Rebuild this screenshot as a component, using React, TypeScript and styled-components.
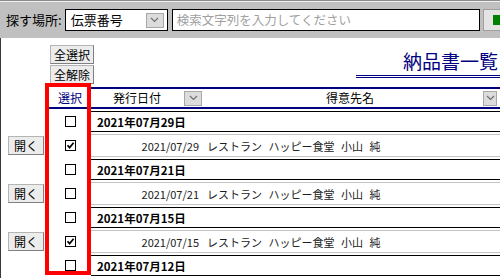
import React from 'react';
import styled, { createGlobalStyle } from 'styled-components';

const GlobalStyle = createGlobalStyle`
  html, body {
    margin: 0;
    padding: 0;
    background: #ffffff;
  }
  body {
    width: 500px;
    height: 278px;
    overflow: hidden;
    font-family: "Noto Sans CJK JP", "Liberation Sans", sans-serif;
    font-size: 12px;
    color: #000;
  }
`;

interface Row {
  kind: 'group' | 'detail';
  label?: string;
  date?: string;
  name?: string;
  checked?: boolean;
}

const rows: Row[] = [
  { kind: 'group', label: '2021年07月29日' },
  { kind: 'detail', date: '2021/07/29', name: 'レストラン ハッピー食堂 小山 純', checked: true },
  { kind: 'group', label: '2021年07月21日' },
  { kind: 'detail', date: '2021/07/21', name: 'レストラン ハッピー食堂 小山 純' },
  { kind: 'group', label: '2021年07月15日' },
  { kind: 'detail', date: '2021/07/15', name: 'レストラン ハッピー食堂 小山 純', checked: true },
  { kind: 'group', label: '2021年07月12日' },
];

const Page = styled.div`
  width: 500px;
  height: 278px;
  overflow: hidden;
  display: flex;
  flex-direction: column;
`;

/* search bar */
const Toolbar = styled.div`
  height: 36px;
  flex: none;
  background: #c0c0c0;
  border-top: 1px solid #8c8c8c;
  box-shadow: inset 0 1px 0 #f0f0f0;
  display: flex;
  align-items: center;
  padding: 1px 0 0 6px;
  white-space: nowrap;
`;

const Label = styled.span`
  flex: none;
  font-size: 13px;
  line-height: 16px;
  margin-right: 3px;
`;

const SelectBox = styled.div`
  flex: none;
  width: 96px;
  height: 20px;
  background: #fff;
  border: 1px solid #000;
  display: flex;
  align-items: center;
  padding-left: 5px;
  box-sizing: content-box;
  margin-right: 4px;
`;

const SelectText = styled.span`
  flex: 1;
  font-size: 13px;
  line-height: 16px;
`;

const DropButton = styled.span<{ $w?: number }>`
  width: ${(p) => p.$w ?? 16}px;
  height: 13px;
  margin-right: 3px;
  background: #dcdcdc;
  border: 1px solid #a8a8a8;
  display: flex;
  align-items: center;
  justify-content: center;
  flex: none;
`;

const SearchInput = styled.div`
  flex: none;
  width: 302px;
  height: 20px;
  background: #fff;
  border: 1px solid #000;
  display: flex;
  align-items: center;
  padding-left: 4px;
  color: #a0a0a0;
  font-size: 12.5px;
  line-height: 16px;
  margin-right: 3px;
`;

const GoButton = styled.div`
  flex: none;
  width: 20px;
  height: 20px;
  background: #e4e4e4;
  border: 1px solid #a0a0a0;
  border-right: none;
  display: flex;
  align-items: center;
  padding-left: 9px;
`;

const GreenMark = styled.span`
  width: 10px;
  height: 10px;
  background: #008000;
`;

/* main area */
const Main = styled.div`
  flex: 1;
  position: relative;
  border-left: 1px solid #3a3a3a;
  background: #fff;
`;

const TopArea = styled.div`
  height: 49px;
  display: flex;
  align-items: flex-start;
  padding: 7px 0 0 49px;
  box-sizing: border-box;
`;

const BulkButtons = styled.div`
  display: flex;
  flex-direction: column;
  gap: 1px;
`;

const SmallButton = styled.button`
  height: 19px;
  padding: 0 3px;
  background: #ececec;
  border: 1px solid #b4b4b4;
  border-right-color: #808080;
  border-bottom-color: #808080;
  font-family: inherit;
  font-size: 12px;
  line-height: 14px;
  color: #000;
  display: flex;
  align-items: center;
  justify-content: center;
  white-space: nowrap;
`;

const TitleBlock = styled.div`
  margin-left: auto;
  width: 142px;
  height: 30px;
  border-bottom: 3px double #000080;
  text-align: right;
  color: #000080;
  font-size: 19px;
  line-height: 31px;
  padding-right: 2px;
  box-sizing: content-box;
  white-space: nowrap;
  overflow: hidden;
`;

const Grid = styled.div`
  display: grid;
  grid-template-columns: 44px 46px 1fr;
`;

const HeaderRow = styled(Grid)`
  height: 22px;
`;

const HeadSelect = styled.div`
  grid-column: 2;
  border-bottom: 2px solid #000080;
  color: #000080;
  display: flex;
  align-items: center;
  justify-content: center;
  padding: 1px 0 0 4px;
`;

const HeadCells = styled.div`
  border-top: 2px solid #000080;
  border-bottom: 2px solid #000080;
  display: grid;
  grid-template-columns: 112px 1fr;
  align-items: center;
`;

const HeadCell = styled.div<{ $pad: number }>`
  display: flex;
  align-items: center;
  padding-left: ${(p) => p.$pad}px;
  line-height: 14px;
  white-space: nowrap;
`;

const BodyRow = styled(Grid)<{ $detail: boolean }>`
  height: ${(p) => (p.$detail ? 25 : 23)}px;
  padding-top: 2px;
  box-sizing: border-box;
`;

const OpenCell = styled.div`
  display: flex;
  align-items: center;
  padding-left: 7px;
`;

const CheckCell = styled.div`
  display: flex;
  align-items: center;
  justify-content: center;
  padding-left: 4px;
`;

const Box = styled.span`
  width: 9px;
  height: 9px;
  border: 1px solid #000;
  background: #fff;
  display: flex;
  align-items: center;
  justify-content: center;
`;

const DataCell = styled.div<{ $detail: boolean }>`
  border-top: 1px solid ${(p) => (p.$detail ? '#c4c4c4' : '#000')};
  border-bottom: 1px solid ${(p) => (p.$detail ? '#c4c4c4' : '#000')};
  display: grid;
  grid-template-columns: 112px 1fr;
  align-items: center;
  white-space: nowrap;
`;

const GroupLabel = styled.span`
  grid-column: 1 / 3;
  padding-left: 6px;
  font-weight: bold;
  font-size: 11.5px;
  line-height: 14px;
`;

const DateText = styled.span`
  text-align: right;
  padding-right: 4px;
  font-size: 11px;
  line-height: 14px;
  color: #202020;
`;

const NameText = styled.span`
  padding-left: 4px;
  font-size: 11px;
  line-height: 14px;
  word-spacing: 4px;
  color: #202020;
`;

const Highlight = styled.div`
  position: absolute;
  left: 44px;
  top: 45px;
  width: 38px;
  height: 184px;
  border: 4px solid #ff0000;
  pointer-events: none;
`;

const Chevron = () => (
  <svg width="9" height="6" viewBox="0 0 9 6">
    <path d="M1 1 L4.5 4.5 L8 1" fill="none" stroke="#707070" strokeWidth="1.2" />
  </svg>
);

const CheckBox: React.FC<{ checked?: boolean }> = ({ checked }) => (
  <Box>
    {checked && (
      <svg width="9" height="9" viewBox="0 0 9 9">
        <path d="M1.5 4.2 L3.6 6.6 L7.6 1.8" fill="none" stroke="#000" strokeWidth="1.7" />
      </svg>
    )}
  </Box>
);

export default function App() {
  return (
    <Page>
      <GlobalStyle />
      <Toolbar>
        <Label>探す場所:</Label>
        <SelectBox>
          <SelectText>伝票番号</SelectText>
          <DropButton>
            <Chevron />
          </DropButton>
        </SelectBox>
        <SearchInput>検索文字列を入力してください</SearchInput>
        <GoButton>
          <GreenMark />
        </GoButton>
      </Toolbar>
      <Main>
        <TopArea>
          <BulkButtons>
            <SmallButton>全選択</SmallButton>
            <SmallButton>全解除</SmallButton>
          </BulkButtons>
          <TitleBlock>納品書一覧</TitleBlock>
        </TopArea>
        <HeaderRow>
          <HeadSelect>選択</HeadSelect>
          <HeadCells>
            <HeadCell $pad={22}>
              発行日付
              <DropButton style={{ marginLeft: 23 }}>
                <Chevron />
              </DropButton>
            </HeadCell>
            <HeadCell $pad={123}>
              得意先名
              <DropButton style={{ marginLeft: 'auto' }} $w={12}>
                <Chevron />
              </DropButton>
            </HeadCell>
          </HeadCells>
        </HeaderRow>
        {rows.map((row, i) => {
          const detail = row.kind === 'detail';
          return (
            <BodyRow key={i} $detail={detail}>
              <OpenCell>{detail && <SmallButton style={{ width: 36 }}>開く</SmallButton>}</OpenCell>
              <CheckCell>
                <CheckBox checked={row.checked} />
              </CheckCell>
              <DataCell $detail={detail}>
                {detail ? (
                  <>
                    <DateText>{row.date}</DateText>
                    <NameText>{row.name}</NameText>
                  </>
                ) : (
                  <GroupLabel>{row.label}</GroupLabel>
                )}
              </DataCell>
            </BodyRow>
          );
        })}
        <Highlight />
      </Main>
    </Page>
  );
}
